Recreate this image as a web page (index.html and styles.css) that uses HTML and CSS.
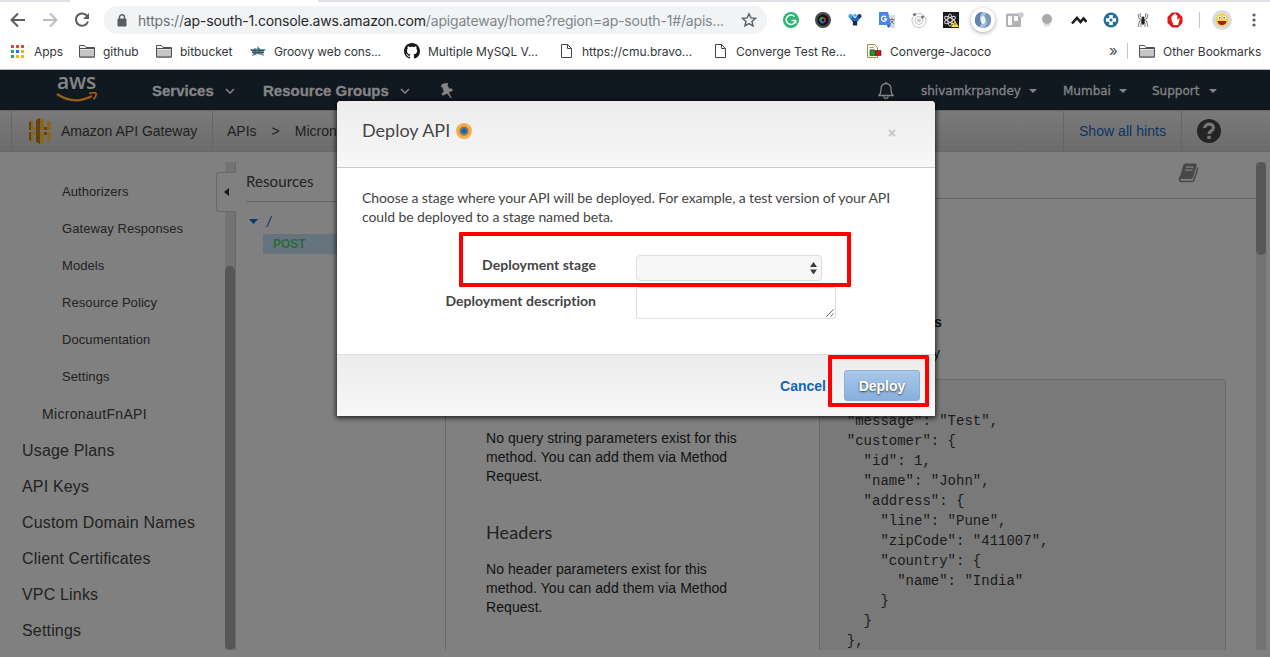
FILE: index.html
```html
<!DOCTYPE html>
<html lang="en">
<head>
<meta charset="utf-8">
<title>API Gateway</title>
<link rel="stylesheet" href="styles.css">
</head>
<body>
<svg class="defs" width="0" height="0">
  <symbol id="folder" viewBox="0 0 16 14"><path d="M.5 12.500v-11h5l1.500 2h8.500v9.500h-15z" fill="#fff" stroke="#505050"/><path d="M1 5.500h14v7H1z" fill="#c6c6c6"/><path d="M.5 12.500v-8h15" fill="none" stroke="#505050"/><path d="M.5 13h15" stroke="#505050"/></symbol>
  <symbol id="doc" viewBox="0 0 16 16"><path d="M3.500 1.500h6l4 4v9h-10zM9.500 1.500v4h4" fill="#fff" stroke="#444"/></symbol>
  <symbol id="chev" viewBox="0 0 10 6"><path d="M1 1l4 4 4-4" fill="none" stroke="#858585" stroke-width="1.500"/></symbol>
  <symbol id="caret" viewBox="0 0 8 4"><path d="M0 0h8L4 4z" fill="#858585"/></symbol>
</svg>
<header class="browser">
  <div class="tabs"><span class="tab"></span></div>
  <div class="toolbar">
    <div class="navbtns">
      <svg width="16" height="16" viewBox="0 0 16 16"><path d="M15 8H2M8 1.500L1.500 8 8 14.500" fill="none" stroke="#5a5d61" stroke-width="2"/></svg>
      <svg width="16" height="16" viewBox="0 0 16 16"><path d="M1 8h13M8 1.500L14.500 8 8 14.500" fill="none" stroke="#bcbdbf" stroke-width="2"/></svg>
      <svg width="16" height="16" viewBox="0 0 16 16"><path d="M13.300 4.200A6.200 6.200 0 1 0 14 9.500" fill="none" stroke="#5a5d61" stroke-width="2"/><path d="M15 1v6H9z" fill="#5a5d61"/></svg>
    </div>
    <div class="address">
      <svg width="10" height="13" viewBox="0 0 10 13"><path d="M1 5h8v7H1z" fill="#5a5d61" stroke="#5a5d61"/><path d="M2.500 5V3.300a2.500 2.500 0 0 1 5 0V5" fill="none" stroke="#5a5d61" stroke-width="1.400"/></svg>
      <span class="url"><i class="scheme">https://</i>ap-south-1.console.aws.amazon.com<i class="path">/apigateway/home?region=ap-south-1#/apis...</i></span>
      <svg class="star" width="16" height="16" viewBox="0 0 16 16"><path d="M8 1.800l1.900 4.100 4.500.5-3.400 3 1 4.500L8 11.600l-4 2.300 1-4.500-3.400-3 4.500-.5z" fill="none" stroke="#5a5d61" stroke-width="1.400"/></svg>
    </div>
    <div class="exts">
      <svg width="16" height="16" viewBox="0 0 16 16"><circle cx="8" cy="8" r="8" fill="#2bb673"/><path d="M11.500 4.800A4.700 4.700 0 1 0 12.500 8.500H8.500M12.600 8.500v3" fill="none" stroke="#fff" stroke-width="1.600"/></svg>
      <svg width="16" height="16" viewBox="0 0 16 16"><circle cx="8" cy="8" r="8" fill="#4a4a4a"/><circle cx="8" cy="8" r="5.500" fill="#111"/><path d="M8 8V5a3 3 0 0 1 3 2.500z" fill="#e23b2e"/><path d="M8 8l3-.5a3 3 0 0 1-2 3.300z" fill="#b4239b"/><path d="M8 8l1 3a3 3 0 0 1-4-1z" fill="#2671c9"/><path d="M8 8l-3 2a3 3 0 0 1 3-5z" fill="#2a9a5b"/><circle cx="8" cy="8" r="1.200" fill="#111"/></svg>
      <svg width="16" height="16" viewBox="0 0 16 16"><path d="M1.500 4.500L5 3l3 3.500L11 3l3.500 1.500L10.200 10v3H5.800v-3z" fill="#2467b4"/><path d="M6 9h4v4.500H6z" fill="#182b4d"/><circle cx="8" cy="3.300" r="1.500" fill="#37b3e8"/><circle cx="3.500" cy="4" r="2.100" fill="#39a4e0"/><circle cx="12.500" cy="4" r="2.100" fill="#183b70"/></svg>
      <svg width="16" height="16" viewBox="0 0 16 16"><path d="M7 3h9v13H9z" fill="#dadce0"/><path d="M0 0h9l3 13H0z" fill="#4a86e8"/><path d="M7 5.200A2.500 2.500 0 1 0 7.500 7H5.200" fill="none" stroke="#fff" stroke-width="1.300"/><path d="M10.500 7.500h5M13 6v1.500M14.500 7.500c-.5 2-2 3.500-3 4M11.500 8.500l3.500 3.500" stroke="#6d7b85" fill="none"/><path d="M8 13h4l-3 3z" fill="#3556b4"/></svg>
      <svg width="16" height="16" viewBox="0 0 16 16"><g fill="none" stroke="#c4c4c4"><circle cx="8" cy="8.500" r="7"/><circle cx="8" cy="8.500" r="4"/></g><circle cx="8" cy="8.500" r="2" fill="#ccc"/><circle cx="3.500" cy="2.500" r="1.600" fill="#777"/><circle cx="11.500" cy="5" r="1.500" fill="#777"/></svg>
      <svg width="16" height="16" viewBox="0 0 16 16"><path d="M0 0h16v16H0z" fill="#1c1c1c"/><g fill="none" stroke="#ddd"><ellipse cx="7" cy="8" rx="2.200" ry="6"/><ellipse cx="7" cy="8" rx="2.200" ry="6" transform="rotate(60 7 8)"/><ellipse cx="7" cy="8" rx="2.200" ry="6" transform="rotate(-60 7 8)"/></g><path d="M12 9l4 6H8z" fill="#ffe21f"/><path d="M12 11v2" stroke="#333"/></svg>
      <svg class="raised" width="24" height="24" viewBox="0 0 24 24"><circle cx="12" cy="12" r="8" fill="#a9bdd6"/><path d="M8 19A8 8 0 0 1 12 4c-4 3-4 8-1 11z" fill="#5f84ae"/><path d="M12 20c5-3 5-8 1-12l3-3a8 8 0 0 1-4 15z" fill="#7798bd"/><ellipse cx="12" cy="12" rx="2.200" ry="4" fill="#edf3fa"/></svg>
      <svg width="20" height="16" viewBox="0 0 20 16"><rect x="1" y="1.500" width="15" height="13.500" rx="1.500" fill="#b3b3b3"/><path d="M3 4h4v9H3zM9 4h4v5H9z" fill="#fff"/><circle cx="16" cy="3" r="2.700" fill="#ccc"/></svg>
      <svg width="16" height="16" viewBox="0 0 16 16"><circle cx="8" cy="11" r="3.500" fill="#ddd"/><circle cx="8" cy="7" r="5" fill="#aaa"/></svg>
      <svg width="16" height="16" viewBox="0 0 16 16"><path d="M1 11.500L6 6l3.500 4 3-3.500 3 3.500" fill="none" stroke="#1b1b1b" stroke-width="2.600"/></svg>
      <svg width="16" height="16" viewBox="0 0 16 16"><circle cx="8" cy="8" r="7.500" fill="#28709a"/><path d="M6.200 3h3.600v3.200H13v3.600H9.800V13H6.200V9.800H3V6.200h3.200z" fill="#fff"/><circle cx="8" cy="8" r="1.500" fill="#28709a"/></svg>
      <svg width="16" height="16" viewBox="0 0 16 16"><g fill="none" stroke="#555" stroke-width=".8"><path d="M8 7L5.500 5 5 1M8 7l2.500-2 .5-4M8 8L4 6.500 3 2M8 8l4-1.500L13 2M8 8.500L4.500 9 3 15M8 8.500l3.500.5 1.500 6M7.500 9L6 11.500V15M8.500 9l1.500 2.500V15"/></g><ellipse cx="8" cy="9.500" rx="1.600" ry="3.300" fill="#222"/><circle cx="8" cy="5.700" r="1.300" fill="#222"/></svg>
      <svg width="16" height="16" viewBox="0 0 16 16"><path d="M5 .5h6L15.500 5v6L11 15.500H5L.5 11V5z" fill="#e01a1a"/><path d="M4.500 8V4.500q.7-1 1.300 0V3q.7-1 1.500 0V2q.8-1 1.500 0v1.500q.8-1 1.500 0V8l1.500-1.500q1-.5 1 .3L11 13H6.500z" fill="#fff"/></svg>
    </div>
    <span class="sep"></span>
    <svg class="avatar" width="20" height="20" viewBox="0 0 20 20"><circle cx="10" cy="10" r="10" fill="#dcdcdc"/><circle cx="10" cy="10" r="6.500" fill="#f8cf47"/><circle cx="7.500" cy="7.500" r="1.700" fill="#fff"/><circle cx="12.500" cy="7.500" r="1.700" fill="#fff"/><circle cx="7.800" cy="7.700" r=".7" fill="#222"/><circle cx="12.200" cy="7.700" r=".7" fill="#222"/><path d="M5.500 11h9q-.5 4-4.500 4.200Q6 15 5.500 11z" fill="#9e2418"/></svg>
    <svg class="menu" width="4" height="14" viewBox="0 0 4 14"><g fill="#5a5d61"><circle cx="2" cy="2" r="1.600"/><circle cx="2" cy="7" r="1.600"/><circle cx="2" cy="12" r="1.600"/></g></svg>
  </div>
  <nav class="bookmarks">
    <span class="bm"><svg width="16" height="16" viewBox="0 0 16 16"><path d="M1 2h3v3H1z M6 2h3v3H6z M11 2h3v3h-3z" fill="#e8453c"/><path d="M1 7h3v3H1zM1 12h3v3H1z" fill="#2da94f"/><path d="M6 7h3v3H6z" fill="#1a73e8"/><path d="M11 7h3v3h-3zM6 12h3v3H6zM11 12h3v3h-3z" fill="#f7b50c"/></svg><b>Apps</b></span>
    <span class="bm"><svg width="16" height="14"><use href="#folder"/></svg><b>github</b></span>
    <span class="bm"><svg width="16" height="14"><use href="#folder"/></svg><b>bitbucket</b></span>
    <span class="bm"><svg width="16" height="16" viewBox="0 0 16 16"><path d="M8 3l1.700 3H16l-3 3.500 1 3.500-6-2-6 2 1-3.500L0 6h6.300z" fill="#5d99ad"/><path d="M1 7.500h13M2 9.500h12M5 5v7M9 5v6" stroke="#444a50"/></svg><b class="tight">Groovy web cons...</b></span>
    <span class="bm"><svg width="16" height="16" viewBox="0 0 16 16"><path d="M8 0C3.580 0 0 3.580 0 8c0 3.540 2.290 6.530 5.470 7.590.4.070.55-.17.55-.38 0-.19-.01-.82-.01-1.490-2.010.37-2.530-.49-2.690-.94-.09-.23-.48-.94-.82-1.130-.28-.15-.68-.52-.01-.53.630-.01 1.080.58 1.230.82.72 1.210 1.870.87 2.330.66.070-.52.280-.87.510-1.070-1.780-.2-3.640-.89-3.640-3.950 0-.87.310-1.590.82-2.150-.08-.2-.36-1.020.08-2.120 0 0 .67-.21 2.200.82.64-.18 1.320-.27 2-.27s1.360.09 2 .27c1.530-1.040 2.200-.82 2.200-.82.44 1.100.16 1.920.08 2.120.51.560.82 1.270.82 2.150 0 3.070-1.870 3.750-3.650 3.950.29.250.54.730.54 1.480 0 1.070-.01 1.930-.01 2.200 0 .21.150.46.550.38A8 8 0 0 0 16 8c0-4.420-3.580-8-8-8z" fill="#191717"/></svg><b>Multiple MySQL V...</b></span>
    <span class="bm"><svg width="16" height="16"><use href="#doc"/></svg><b>https://cmu.bravo...</b></span>
    <span class="bm"><svg width="16" height="16"><use href="#doc"/></svg><b>Converge Test Re...</b></span>
    <span class="bm"><svg width="16" height="16" viewBox="0 0 16 16"><path d="M1.500 1.500h7l3 3v10h-10z" fill="#fffbe8" stroke="#a78b45"/><path d="M3.500 4.500h4M3.500 6.500h5" stroke="#8a9fc0"/><path d="M4 7.500h5.500v5H4z" fill="#1d9a1d" stroke="#222" stroke-width=".6"/><path d="M9.500 7.500H15v5H9.500z" fill="#cf1717" stroke="#222" stroke-width=".6"/></svg><b>Converge-Jacoco</b></span>
    <span class="more">»</span>
    <span class="bm"><svg width="16" height="14"><use href="#folder"/></svg><b>Other Bookmarks</b></span>
  </nav>
</header>

<main class="console">
  <nav class="awsnav">
    <div class="logo"><span>aws</span><svg width="42" height="11" viewBox="0 0 42 11"><path d="M1 2Q18 13.500 36 4" fill="none" stroke="#9a5e14" stroke-width="2.200"/><path d="M33 1.500q6-1.500 7 0t-2.500 6" fill="none" stroke="#9a5e14" stroke-width="1.800"/></svg></div>
    <span class="big services">Services</span><svg width="10" height="6"><use href="#chev"/></svg>
    <span class="big groups">Resource Groups</span><svg width="10" height="6"><use href="#chev"/></svg>
    <svg class="pin" width="14" height="16" viewBox="0 0 14 16"><path d="M2 1.500L7 0l.8 1-.8 1 2 4 2.500-.2 1 1.700-4 1.700 2.700 6-4-5-4.500 2-.8-1.500L4 8.500 2.700 4 1.200 3.500z" fill="#858585" stroke="#858585" stroke-width=".8"/></svg>
    <div class="user">
      <svg width="16" height="18" viewBox="0 0 16 18"><path d="M1 13.500c2-2 2-4 2-7a5 5 0 0 1 10 0c0 3 0 5 2 7zM8 0v2M6 14.500a2 2 0 0 0 4 0" fill="none" stroke="#858585" stroke-width="1.300"/></svg>
      <span>shivamkrpandey</span><svg width="8" height="4"><use href="#caret"/></svg>
      <span>Mumbai</span><svg width="8" height="4"><use href="#caret"/></svg>
      <span>Support</span><svg width="8" height="4"><use href="#caret"/></svg>
    </div>
  </nav>
  <nav class="crumbs">
    <div class="product"><svg width="22" height="26" viewBox="0 0 22 26"><path d="M0 4l4-1.500V9h3V2l4-2 4 2v7h3V2.500L22 4v8H0z" fill="#8b6522"/><path d="M0 14h22v8l-4 1.500V17h-3v7l-4 2-4-2v-7H4v6.500L0 22z" fill="#8b6522"/><path d="M7 2l4-2v26l-4-2zM0 4l2-.8V12H0zM0 14h2v8.800L0 22zM15 9h3v3h-3zM15 14h3v3h-3z" fill="#5e4315"/></svg><span>Amazon API Gateway</span></div>
    <div class="trail"><span>APIs</span><span>&gt;</span><span>Micron</span></div>
    <div class="hints">Show all hints</div>
    <div class="help"><svg width="24" height="24" viewBox="0 0 24 24"><circle cx="12" cy="12" r="12" fill="#242424"/><path d="M7.700 9c.2-5 8.800-5 8.700-.3 0 3.300-4.200 3-4.300 6.300" fill="none" stroke="#777" stroke-width="3.200"/><path d="M10.300 16.800h3.400V20h-3.400z" fill="#777"/></svg></div>
  </nav>
  <section class="workspace">
    <aside class="side">
      <ul class="menu-list">
        <li class="l3">Authorizers</li><li class="l3">Gateway Responses</li><li class="l3">Models</li><li class="l3">Resource Policy</li><li class="l3">Documentation</li><li class="l3">Settings</li>
        <li class="l2">MicronautFnAPI</li>
        <li class="l1">Usage Plans</li><li class="l1">API Keys</li><li class="l1">Custom Domain Names</li><li class="l1">Client Certificates</li><li class="l1">VPC Links</li><li class="l1">Settings</li>
      </ul>
      <div class="track"><div class="thumb"></div></div>
      <div class="collapse"><svg width="5" height="8" viewBox="0 0 5 8"><path d="M5 0v8L0 4z" fill="#1a1a1a"/></svg></div>
    </aside>
    <section class="tree">
      <h2>Resources</h2>
      <div class="root"><svg width="9" height="5" viewBox="0 0 9 5"><path d="M0 0h9L4.500 5z" fill="#063a75"/></svg><span>/</span></div>
      <div class="verb">POST</div>
    </section>
    <section class="method">
      <header class="method-head"><svg width="21" height="20" viewBox="0 0 21 20"><path d="M4 13q-3 1-2.500 3.500T5 18.500h9q1.500 0 2-1.500L20 4.500" fill="none" stroke="#484848" stroke-width="1.500"/><path d="M7 .5h10.500q1.700 0 1.200 2L15.200 14q-.5 2-2 2H2.500Q1.500 14.500 2.500 12L5 3Q5.500.5 7 .5z" fill="#484848"/><path d="M8 4.200h7.500M7 7.200h7.500" stroke="#808080" stroke-width="1.300"/></svg></header>
      <div class="panes">
        <div class="params">
          <p>No query string parameters exist for this method. You can add them via Method Request.</p>
          <h3>Headers</h3>
          <p>No header parameters exist for this method. You can add them via Method Request.</p>
        </div>
        <div class="result">
          <div class="rline strong">s</div>
          <div class="rline">y</div>
<pre>{
  "message": "Test",
  "customer": {
    "id": 1,
    "name": "John",
    "address": {
      "line": "Pune",
      "zipCode": "411007",
      "country": {
        "name": "India"
      }
    }
  },</pre>
        </div>
      </div>
    </section>
    <div class="track main-track"><div class="thumb"></div></div>
  </section>

  <div class="modal" role="dialog">
    <header class="modal-head"><h1>Deploy API</h1><span class="hotspot"></span><span class="close">×</span></header>
    <div class="modal-body">
      <p>Choose a stage where your API will be deployed. For example, a test version of your API<br>could be deployed to a stage named beta.</p>
      <div class="field"><label>Deployment stage</label><div class="select"><svg width="7" height="12" viewBox="0 0 7 12"><path d="M0 5h7L3.500 0zM0 7.500h7l-3.500 5z" fill="#3c3c3c"/></svg></div></div>
      <div class="field second"><label>Deployment description</label><div class="area"><svg width="8" height="8" viewBox="0 0 8 8"><path d="M.5 7.500l7-7M4.500 7.500l3-3" stroke="#555" stroke-width=".9"/></svg></div></div>
    </div>
    <footer class="modal-foot"><a class="cancel">Cancel</a><span class="deploy">Deploy</span></footer>
  </div>
  <div class="mark stage-mark"></div>
  <div class="mark deploy-mark"></div>
</main>
</body>
</html>
```
FILE: styles.css
```css
* { box-sizing: border-box; }
body { margin: 0; width: 1270px; height: 657px; overflow: hidden; font-family: "Liberation Sans", Arial, sans-serif; }
svg { display: block; flex: none; }
.defs { position: absolute; }
h1, h2, h3, p, ul, pre { margin: 0; padding: 0; font-weight: normal; }
ul { list-style: none; }
span, b { white-space: nowrap; }

.browser { height: 70px; background: #fff; border-bottom: 1px solid #b4b6b8; font-family: Inter, Roboto, sans-serif; }
.tabs { height: 2px; background: #dee1e6; padding-left: 70px; }
.tab { display: block; width: 248px; height: 2px; background: #fff; }
.toolbar { height: 36px; display: flex; align-items: center; }
.navbtns { display: flex; gap: 16px; width: 104px; padding-left: 10px; }
.address { width: 663px; height: 28px; border-radius: 14px; background: #f1f3f4; display: flex; align-items: center; padding: 0 10px 0 13px; }
.url { font-size: 14px; margin-left: 11px; color: #26282b; letter-spacing: -.17px; flex: 1; }
.url i { font-style: normal; }
.scheme { color: #6c7075; }
.path { color: #80868b; }
.exts { display: grid; grid-template-columns: repeat(13, 32px); justify-items: center; align-items: center; margin-left: 8px; }
.raised { border-radius: 50%; box-shadow: 0 1px 4px rgba(0,0,0,.35); }
.sep { width: 1px; height: 16px; background: #c4c6c9; margin-left: 8px; }
.avatar { margin-left: 12px; }
.menu { margin-left: 20px; }
.bookmarks { height: 31px; padding: 0 0 5px 10px; display: grid; grid-template-columns: 69px 77px 94px 154px 154px 154px 154px 243px 30px 1fr; align-items: center; }
.bm { display: flex; align-items: center; gap: 8px; font-size: 12px; color: #34373b; }
.bm b { font-weight: 400; letter-spacing: -.04px; }
.bm .tight { letter-spacing: -.14px; }
.more { font-size: 15px; color: #4b4e52; line-height: 16px; width: 19px; border-right: 1px solid #c4c6c9; }

.console { position: relative; height: 587px; background: #808080; display: flex; flex-direction: column; }
.awsnav { height: 40px; background: #111920; display: flex; align-items: center; color: #858585; padding-top: 1px; }
.logo { width: 152px; padding-left: 56px; height: 39px; }
.logo span { display: block; font: 600 21px/21px "Open Sans", sans-serif; letter-spacing: -.2px; padding-left: 1px; height: 21px; }
.big { font-size: 15px; font-weight: 700; -webkit-text-stroke: .3px #858585; }
.services { width: 73px; }
.groups { width: 137px; margin-left: 28px; }
.pin { margin-left: 30px; }
.user { margin-left: auto; width: 392px; display: grid; grid-template-columns: 43px 108px 34px 56px 33px 57px 1fr; align-items: center; font: 12px "DejaVu Sans", sans-serif; -webkit-text-stroke: .3px #858585; }

.crumbs { height: 42px; background: linear-gradient(#7a7a7a, #6c6c6c); border-bottom: 1px solid #676767; border-top: 1px solid #666; display: flex; font-size: 14px; color: #202020; }
.product { margin-left: 11px; width: 202px; border-left: 1px solid #666; border-right: 1px solid #666; display: flex; align-items: center; padding-left: 17px; gap: 10px; }
.trail { flex: 1; display: flex; align-items: center; gap: 15px; padding-left: 14px; }
.hints { width: 119px; border-left: 1px solid #666; border-right: 1px solid #666; display: flex; align-items: center; justify-content: center; color: #0b3465; letter-spacing: .05px; }
.help { width: 88px; display: flex; align-items: center; padding-left: 15px; }

.workspace { height: 505px; display: flex; color: #222; }
.side { position: relative; width: 236px; display: flex; justify-content: space-between; padding-top: 10px; }
.menu-list { padding-top: 11px; }
.l1, .l2, .l3 { display: flex; align-items: center; white-space: nowrap; }
.l3 { height: 37px; padding-left: 62px; font-size: 13px; letter-spacing: .07px; }
.l2 { height: 37px; padding-left: 42px; font-size: 14px; letter-spacing: .33px; }
.l1 { height: 36px; padding: 2px 0 0 22px; font-size: 16px; letter-spacing: .17px; }
.track { width: 11px; height: 488px; background: #737373; border-right: 1px solid #686868; padding-top: 104px; }
.thumb { width: 10px; height: 384px; border-radius: 5px; background: #575757; }
.collapse { position: absolute; left: 216px; top: 20px; width: 20px; height: 40px; background: #808080; border: 1px solid #686868; border-right: 0; border-radius: 4px 0 0 4px; display: flex; align-items: center; padding-left: 7px; }
.tree { width: 110px; padding: 19px 0 0 10px; }
.tree h2 { font: 15px/20px Lato, sans-serif; height: 31px; border-bottom: 1px solid #656565; letter-spacing: .1px; }
.root { display: flex; align-items: center; gap: 9px; height: 32px; padding: 7px 0 0 3px; font-size: 14px; font-style: italic; color: #063a75; }
.verb { margin-left: 17px; height: 20px; background: #66747f; color: #2d6a3c; font: bold 12px/20px "Liberation Sans", sans-serif; padding-left: 10px; }
.method { width: 910px; display: flex; flex-direction: column; }
.method-head { height: 47px; border-bottom: 1px solid #656565; padding: 11px 0 0 832px; }
.panes { flex: 1; display: flex; height: 451px; padding-left: 99px; }
.params { width: 374px; height: 451px; border-left: 1px solid #6a6a6a; padding: 230px 70px 0 40px; font-size: 14px; line-height: 19px; letter-spacing: .065px; color: #111; }
.params h3 { font: 18px/24px Lato, sans-serif; letter-spacing: .1px; margin: 34px 0 16px; color: #222; }
.result { width: 407px; padding-top: 108px; }
.rline { height: 31px; padding-left: 114px; font-size: 14px; line-height: 30px; color: #111; }
.strong { font-weight: 700; padding-left: 115px; }
.result pre { margin-top: 10px; height: 271px; overflow: hidden; background: #797979; border: 1px solid #686868; border-bottom: 0; border-radius: 4px 4px 0 0; padding: 11px 10px 0; font: 14px/20px "Liberation Mono", monospace; color: #1a1a1a; }
.main-track { height: 488px; width: 10px; margin-top: 10px; padding: 0; border: 0; }
.main-track .thumb { height: 93px; }

.modal { position: absolute; left: 337px; top: 31px; width: 598px; height: 315px; background: #fff; border-radius: 4px 4px 0 0; box-shadow: 0 1px 5px 1px rgba(0,0,0,.75); color: #444; font-family: Lato, sans-serif; }
.modal-head { height: 67px; border-bottom: 1px solid #ccc; border-radius: 4px 4px 0 0; background: linear-gradient(#ececec, #f7f7f7); display: flex; align-items: flex-start; padding: 17px 39px 0 25px; }
.modal-head h1 { font-size: 18px; line-height: 24px; text-shadow: 0 1px #fff; }
.hotspot { width: 16px; height: 16px; margin: 5px 0 0 6px; border-radius: 50%; background: radial-gradient(circle, #1166bb 0 2.200px, #8d7b5c 3.200px 4.200px, #fbad4d 5.200px); }
.close { margin-left: auto; font: bold 14px/30px "Liberation Sans", sans-serif; color: #c4c4c4; }
.modal-body { height: 186px; padding: 20px 25px 0; }
.modal-body p { font-size: 14px; line-height: 19px; white-space: nowrap; letter-spacing: -.09px; }
.field { display: flex; margin-top: 29px; height: 26px; }
.field label { width: 234px; margin-right: 40px; text-align: right; font-weight: 700; font-size: 14px; line-height: 20px; letter-spacing: .03px; }
.select { width: 186px; height: 26px; background: #f7f7f7; border: 1px solid #ddd; border-radius: 4px; display: flex; align-items: center; justify-content: flex-end; padding-right: 4px; }
.second { margin-top: 6px; height: 32px; }
.second label { padding-top: 4px; }
.area { width: 200px; height: 32px; border: 1px solid #ddd; border-radius: 3px; display: flex; align-items: flex-end; justify-content: flex-end; padding: 1px; }
.modal-foot { height: 62px; border-top: 1px solid #ddd; background: linear-gradient(#ececec, #f7f7f7); display: flex; align-items: center; justify-content: flex-end; padding-right: 15px; font: bold 14px "Liberation Sans", sans-serif; }
.cancel { color: #1166bb; margin-right: 18px; }
.deploy { width: 76px; height: 31px; border: 1px solid #88aedb; border-radius: 3px; background: linear-gradient(#a9c7e9, #87b0dd); color: #fff; text-align: center; line-height: 30px; text-shadow: 0 1px 2px #444; }
.mark { position: absolute; border: 4px solid #f00; border-radius: 1px; }
.stage-mark { left: 459px; top: 162px; width: 392px; height: 55px; }
.deploy-mark { left: 828px; top: 285px; width: 101px; height: 52px; }
```
